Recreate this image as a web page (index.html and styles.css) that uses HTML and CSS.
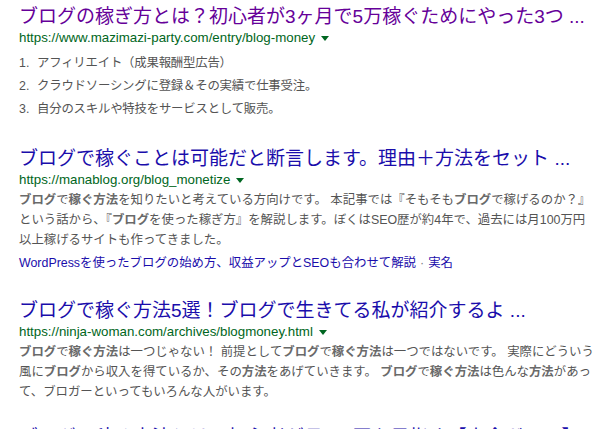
FILE: index.html
```html
<!DOCTYPE html>
<html lang="ja">
<head>
<meta charset="utf-8">
<title>ブログ 稼ぐ方法</title>
<link rel="stylesheet" href="styles.css">
</head>
<body>
<div class="serp">
  <div class="result">
    <h3 class="title visited">ブログの稼ぎ方とは？初心者が3ヶ月で5万稼ぐためにやった3つ ...</h3>
    <div class="url">https://www.mazimazi-party.com/entry/blog-money<span class="arrow"></span></div>
    <ol class="list">
      <li><span class="num">1.</span>アフィリエイト（成果報酬型広告）</li>
      <li><span class="num">2.</span>クラウドソーシングに登録＆その実績で仕事受注。</li>
      <li><span class="num">3.</span>自分のスキルや特技をサービスとして販売。</li>
    </ol>
  </div>
  <div class="result">
    <h3 class="title">ブログで稼ぐことは可能だと断言します。理由＋方法をセット ...</h3>
    <div class="url">https://manablog.org/blog_monetize<span class="arrow"></span></div>
    <div class="snippet"><b>ブログ</b>で<b>稼ぐ方法</b>を知りたいと考えている方向けです。 本記事では『そもそも<b>ブログ</b>で稼げるのか？』<br>という話から、『<b>ブログ</b>を使った稼ぎ方』を解説します。ぼくはSEO歴が約4年で、過去には月100万円<br>以上稼げるサイトも作ってきました。</div>
    <div class="sitelinks"><span class="link">WordPressを使ったブログの始め方、収益アップとSEOも合わせて解説</span><span class="sep">·</span><span class="link">実名</span></div>
  </div>
  <div class="result tight">
    <h3 class="title">ブログで稼ぐ方法5選！ブログで生きてる私が紹介するよ ...</h3>
    <div class="url">https://ninja-woman.com/archives/blogmoney.html<span class="arrow"></span></div>
    <div class="snippet"><b>ブログ</b>で<b>稼ぐ方法</b>は一つじゃない！ 前提として<b>ブログ</b>で<b>稼ぐ方法</b>は一つではないです。 実際にどういう<br>風に<b>ブログ</b>から収入を得ているか、その<b>方法</b>をあげていきます。 <b>ブログ</b>で<b>稼ぐ方法</b>は色んな<b>方法</b>があっ<br>て、ブロガーといってもいろんな人がいます。</div>
  </div>
  <div class="result">
    <h3 class="title">ブログで稼ぐ方法とは？初心者が月5万円を目指す【完全ガイド】 ...</h3>
  </div>
</div>
</body>
</html>
```

FILE: styles.css
```css
html, body {
  margin: 0;
  padding: 0;
  background: #ffffff;
}
body {
  font-family: "Liberation Sans", Arial, "Noto Sans CJK JP", sans-serif;
  width: 610px;
  height: 429px;
  overflow: hidden;
}
.serp {
  padding: 6px 0 0 19px;
}
.result {
  margin-bottom: 27px;
}
.result.tight {
  margin-bottom: 25px;
}
.title {
  margin: 0;
  font-size: 19px;
  line-height: 22px;
  font-weight: normal;
  color: #1a0dab;
  white-space: nowrap;
}
.title.visited {
  color: #660099;
}
.url {
  font-size: 13.3px;
  line-height: 20px;
  color: #006621;
  white-space: nowrap;
}
.arrow {
  display: inline-block;
  margin-left: 6px;
  vertical-align: middle;
  width: 0;
  height: 0;
  border-left: 4px solid transparent;
  border-right: 4px solid transparent;
  border-top: 5px solid #006621;
}
.list {
  list-style: none;
  margin: 4px 0 0;
  padding: 0;
  font-size: 12.4px;
  line-height: 23px;
  color: #545454;
}
.list li {
  letter-spacing: -0.2px;
}
.num {
  display: inline-block;
  width: 18px;
  letter-spacing: 0;
}
.snippet {
  font-size: 12.4px;
  line-height: 20px;
  color: #545454;
  white-space: nowrap;
}
.snippet b {
  color: #6a6a6a;
}
.sitelinks {
  margin-top: 3px;
  font-size: 12.4px;
  line-height: 20px;
  white-space: nowrap;
}
.link {
  color: #1a0dab;
}
.sep {
  color: #808080;
  margin: 0 4px;
}
```
